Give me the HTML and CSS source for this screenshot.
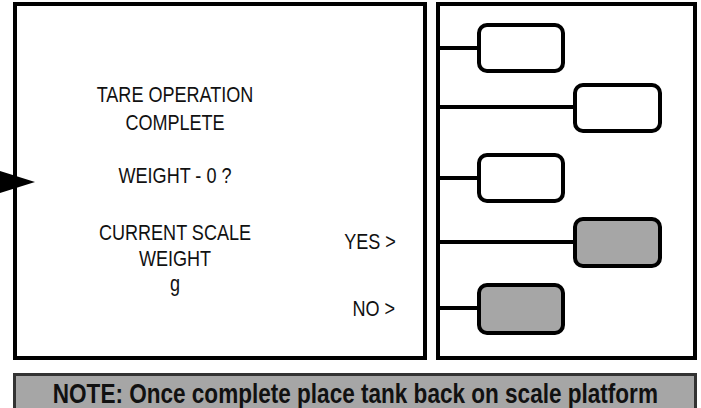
FILE: index.html
```html
<!DOCTYPE html>
<html>
<head>
<meta charset="utf-8">
<link rel="stylesheet" href="styles.css">
</head>
<body>
<div class="page">
  <div class="row">
    <div class="screen">
      <div class="msg">
        <p class="m1">TARE OPERATION<br>COMPLETE</p>
        <p class="m2">WEIGHT - 0 ?</p>
        <p class="m3">CURRENT SCALE<br>WEIGHT<br>g</p>
      </div>
      <div class="keys">
        <p class="yes">YES &gt;</p>
        <p class="no">NO &gt;</p>
      </div>
    </div>
    <div class="pad">
      <svg class="tree" width="253" height="350" viewBox="0 0 253 350">
        <g stroke="#000" stroke-width="4" fill="none">
          <line x1="0" y1="42" x2="39" y2="42"/>
          <line x1="0" y1="101" x2="135" y2="101"/>
          <line x1="0" y1="172" x2="39" y2="172"/>
          <line x1="0" y1="236" x2="135" y2="236"/>
          <line x1="0" y1="302" x2="39" y2="302"/>
          <rect x="39" y="19" width="84" height="46" rx="8" fill="#fff"/>
          <rect x="135" y="79" width="85" height="46" rx="8" fill="#fff"/>
          <rect x="39" y="149" width="84" height="46" rx="8" fill="#fff"/>
          <rect x="135" y="213" width="85" height="47" rx="8" fill="#a6a6a6"/>
          <rect x="39" y="279" width="84" height="48" rx="8" fill="#a6a6a6"/>
        </g>
      </svg>
    </div>
  </div>
  <div class="note"><span class="note-text">NOTE: Once complete place tank back on scale platform</span></div>
  <div class="arrow"></div>
</div>
</body>
</html>
```
FILE: styles.css
```css
html, body {
  margin: 0;
  padding: 0;
  background: #fff;
}
.page {
  position: relative;
  width: 701px;
  height: 408px;
  overflow: hidden;
  box-sizing: border-box;
  padding: 2px 4px 0 13px;
  display: flex;
  flex-direction: column;
  gap: 13px;
  font-family: "Liberation Sans", Arial, sans-serif;
  color: #111;
}
.row {
  display: flex;
  gap: 9px;
  height: 358px;
}
.screen {
  width: 414px;
  box-sizing: border-box;
  border: 4px solid #000;
  display: flex;
}
.msg {
  width: 316px;
  flex: none;
  text-align: center;
  font-size: 22px;
  transform: scaleX(0.82);
  transform-origin: 50% 0;
}
.msg p, .keys p {
  margin: 0;
}
.msg .m1 {
  line-height: 28px;
  margin-top: 75px;
}
.msg .m2 {
  line-height: 28px;
  margin-top: 25px;
}
.msg .m3 {
  line-height: 25.5px;
  margin-top: 30px;
}
.keys {
  flex: 1;
  min-width: 0;
  text-align: right;
  white-space: nowrap;
  padding-right: 28px;
  font-size: 22px;
  line-height: 28px;
  transform: scaleX(0.82);
  transform-origin: calc(100% - 28px) 0;
}
.keys .yes {
  margin-top: 222px;
}
.keys .no {
  margin-top: 39px;
}
.pad {
  width: 261px;
  box-sizing: border-box;
  border: 4px solid #000;
  display: flex;
}
.tree {
  display: block;
}
.note {
  height: 40px;
  box-sizing: border-box;
  border: 3px solid #333;
  background: #a6a6a6;
  padding-top: 3px;
  display: flex;
  justify-content: center;
}
.note-text {
  flex: none;
  white-space: nowrap;
  font-weight: bold;
  font-size: 27px;
  line-height: 30px;
  color: #111;
  transform: scaleX(0.835);
  transform-origin: 50% 0;
}
.arrow {
  position: absolute;
  left: -10px;
  top: 168px;
  width: 0;
  height: 0;
  border-top: 14px solid transparent;
  border-bottom: 14px solid transparent;
  border-left: 45px solid #000;
}
```
